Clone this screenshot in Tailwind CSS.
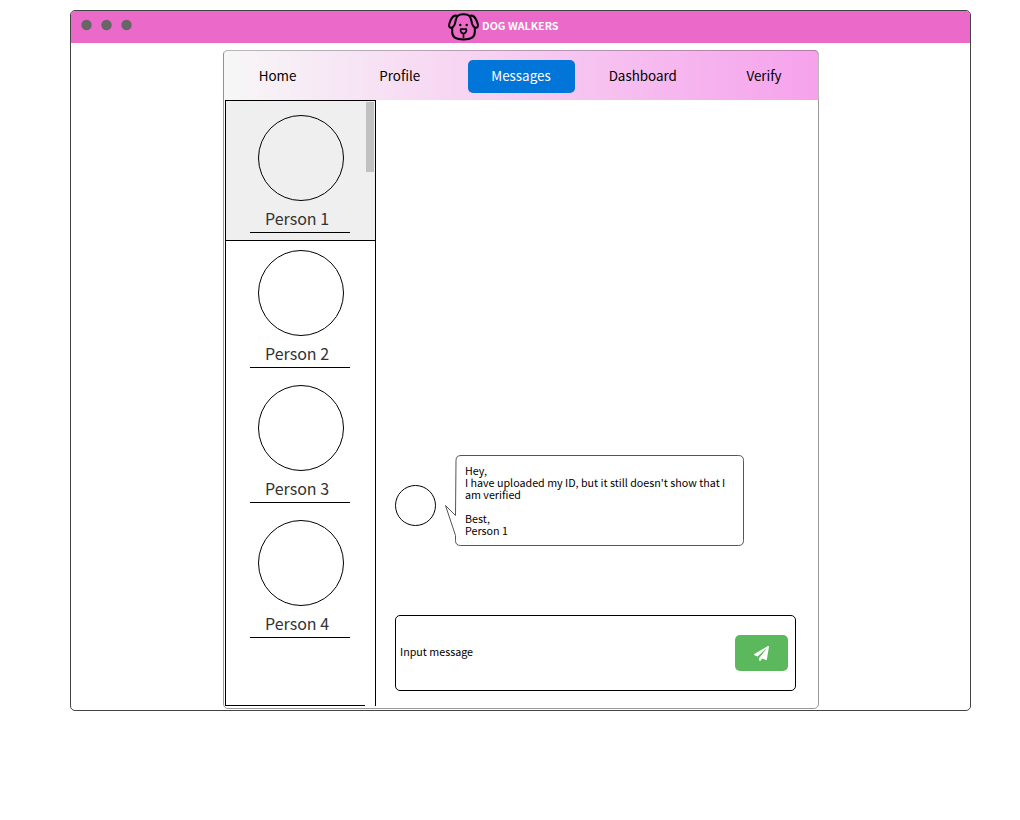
<!DOCTYPE html>
<html lang="en">
<head>
<meta charset="utf-8">
<title>Dog Walkers</title>
<script src="https://cdn.jsdelivr.net/npm/@tailwindcss/browser@4"></script>
</head>
<body class="bg-white text-black font-['Noto_Sans_CJK_SC',sans-serif]">
<div class="ml-[70px] mt-[10px] w-[901px] h-[701px] border border-[#444] rounded-[5px] overflow-hidden">
  <header class="h-8 bg-[#eb69c8] flex">
    <svg class="w-[376px] h-8 shrink-0" viewBox="0 0 376 32" fill="#666"><circle cx="15.500" cy="14" r="5.200"/><circle cx="35.500" cy="14" r="5.200"/><circle cx="55.500" cy="14" r="5.200"/></svg>
    <svg class="mt-px w-[33px] h-[30px] shrink-0" viewBox="0 0 33 30" fill="none" stroke="#000" stroke-width="2" stroke-linecap="round" stroke-linejoin="round">
      <path d="M10.500 4C13 1.700 20 1.700 22.500 4C25 3 27.500 4 29.500 8.500C31.300 12.500 31.500 14.500 30 15.500C27.500 16.500 25.800 14 25 11.500C24.500 8 24 6 22.500 4"/>
      <path d="M10.500 4C8 3 5.500 4 3.500 8.500C1.700 12.500 1.500 14.500 3 15.500C5.500 16.500 7.200 14 8 11.500C8.500 8 9 6 10.500 4"/>
      <path d="M5.200 16V20C5.200 25 9 27.500 16.500 27.500C24 27.500 27.800 25 27.800 20V16"/>
      <path d="M13.700 17.200H19.300C19.800 19.800 18.500 21.500 16.500 21.500C14.500 21.500 13.200 19.800 13.700 17.200ZM16.500 21.500V25.500" stroke-width="1.700"/>
      <circle cx="13.300" cy="13" r="1.200" fill="#000" stroke="none"/><circle cx="19.700" cy="13" r="1.200" fill="#000" stroke="none"/>
    </svg>
    <h1 class="pl-[2px] pt-[7px] text-white font-bold text-[10.700px] leading-4 whitespace-nowrap">DOG WALKERS</h1>
  </header>

  <main class="ml-[152px] mt-[7px] w-[596px] h-[659px] border border-[#999] rounded-[5px]">
    <nav class="-mx-px -mt-px h-[50px] border border-b-0 border-black/25 rounded-t-[5px] bg-linear-to-r/srgb from-[#f7f7f7] to-[#f6a2ec] flex items-start justify-between pt-[9px] text-[13.400px] leading-[30px] text-center">
      <a class="w-[107px] h-[33px]">Home</a>
      <a class="w-[107px] h-[33px] pl-px">Profile</a>
      <a class="w-[107px] h-[33px] rounded-[5px] bg-[#0275d8] text-white">Messages</a>
      <a class="w-[107px] h-[33px]">Dashboard</a>
      <a class="w-[107px] h-[33px] pr-px">Verify</a>
    </nav>
    <div class="flex">
      <aside class="relative ml-px w-[151px] h-[606px] border-l border-r border-t border-black text-[#333] text-[16px] leading-[22px] flex flex-col">
        <section class="h-[140px] shrink-0 bg-[#efefef] border-b border-black flex flex-col pt-[14px]">
          <div class="ml-8 size-[86px] rounded-full border border-black"></div>
          <div class="ml-6 mt-[6px] w-[100px] h-[26px] border-b border-black pr-[6px] text-center">Person 1</div>
        </section>
        <section class="h-[135px] shrink-0 pt-[9px]">
          <div class="ml-8 size-[86px] rounded-full border border-black"></div>
          <div class="ml-6 mt-[6px] w-[100px] h-[26px] border-b border-black pr-[6px] text-center">Person 2</div>
        </section>
        <section class="h-[135px] shrink-0 pt-[9px]">
          <div class="ml-8 size-[86px] rounded-full border border-black"></div>
          <div class="ml-6 mt-[6px] w-[100px] h-[26px] border-b border-black pr-[6px] text-center">Person 3</div>
        </section>
        <section class="h-[135px] shrink-0 pt-[9px]">
          <div class="ml-8 size-[86px] rounded-full border border-black"></div>
          <div class="ml-6 mt-[6px] w-[100px] h-[26px] border-b border-black pr-[6px] text-center">Person 4</div>
        </section>
        <div class="mt-auto w-[139px] h-px bg-black"></div>
        <div class="absolute left-[140px] top-[1px] w-2 h-[70px] bg-[#c1c1c1]"></div>
      </aside>

      <div class="pl-[19px] flex flex-col">
        <div class="mt-[355px] flex">
          <div class="mt-[30px] size-[41px] rounded-full border border-black"></div>
          <div class="ml-[9px] relative w-[299px] h-[91px]">
            <svg class="absolute inset-0" width="299" height="91" fill="none" stroke="#555" stroke-width="1"><path d="M16 .5H293.500Q298.500 .5 298.500 5.500V85.500Q298.500 90.500 293.500 90.500H15.500Q10.500 90.500 10.500 85.500V80.500L.5 50.500L10.500 60.500L11 5.500Q11 .5 16 .5Z"/></svg>
            <p class="relative pl-5 pt-[10px] text-[10.720px] leading-3 whitespace-pre">Hey,
I have uploaded my ID, but it still doesn't show that I
am verified

Best,
Person 1</p>
          </div>
        </div>
        <div class="mt-[69px] w-[401px] h-[76px] border border-black rounded-[5px] flex items-center justify-between pl-1 pr-[7px] text-[10.720px]">
          <span class="leading-4 -mt-[2px]">Input message</span>
          <button class="w-[53px] h-9 rounded-[5px] bg-[#5cb85c] flex items-center justify-center">
            <svg width="15" height="15" viewBox="0 0 512 512" fill="#fff"><path d="M476 3.200L12.500 270.600C-5.600 281-3.300 306.200 13.800 313.500L120.100 358.100L407.400 104.900C412.900 100 420.700 107.500 416 113.200L175.100 406.700V487.200C175.100 510.800 203.600 520.100 217.600 503L281.100 425.700L405.700 477.900C419.900 483.900 436.100 475 438.700 459.600L510.700 27.600C514.100 7.400 492.400-7.200 476 3.200Z"/></svg>
          </button>
        </div>
      </div>
    </div>
  </main>
</div>
</body>
</html>
